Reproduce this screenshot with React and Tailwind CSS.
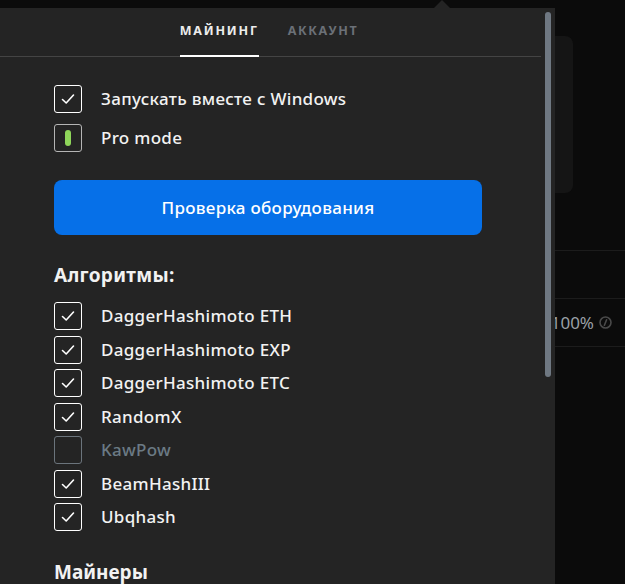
import React from 'react';

const algorithms = [
  { name: 'DaggerHashimoto ETH', on: true },
  { name: 'DaggerHashimoto EXP', on: true },
  { name: 'DaggerHashimoto ETC', on: true },
  { name: 'RandomX', on: true },
  { name: 'KawPow', on: false },
  { name: 'BeamHashIII', on: true },
  { name: 'Ubqhash', on: true },
];

const Check = () => (
  <svg width="16" height="16" viewBox="0 0 16 16" fill="none">
    <path d="M2.5 8.5 L6.2 12 L13.5 4" stroke="#ffffff" strokeWidth="1.6" strokeLinecap="round" strokeLinejoin="round" />
  </svg>
);

const CheckRow = ({ label, on }) => (
  <div className="flex items-center h-[28px] shrink-0">
    <div
      className={`w-[28px] h-[28px] shrink-0 rounded-[3px] border-[1.5px] flex items-center justify-center ${
        on ? 'border-white' : 'border-[#6b747c]'
      }`}
    >
      {on && <Check />}
    </div>
    <span className={`ml-[19px] text-[17px] font-medium tracking-[0.3px] ${on ? 'text-[#f2f2f2]' : 'text-[#6b7a84]'}`}>
      {label}
    </span>
  </div>
);

export default function App() {
  return (
    <div
      className="relative w-[625px] h-[584px] bg-[#0b0b0b] overflow-hidden"
      style={{ fontFamily: '"Noto Sans", "Open Sans", sans-serif' }}
    >
      {/* page behind the popover */}
      <div className="pt-[36px]">
        <div className="h-[157px] mr-[52px] rounded-[8px] bg-[#151515]" />
        <div className="mt-[57px] border-t border-[#1c1c1c]">
          <div className="h-[48px] border-b border-[#1c1c1c]" />
          <div className="h-[48px] border-b border-[#1c1c1c] flex items-center justify-end pr-[13px]">
            <span className="text-[17px] text-[#9aa0a6]">100%</span>
            <svg className="ml-[5px]" width="13" height="13" viewBox="0 0 13 13" fill="none">
              <circle cx="6.5" cy="6.5" r="5.5" stroke="#4a4a4a" strokeWidth="1.6" />
              <path d="M7.6 3.8 L5.4 9.2" stroke="#4a4a4a" strokeWidth="1.6" strokeLinecap="round" />
            </svg>
          </div>
        </div>
      </div>

      {/* notch */}
      <div className="absolute top-0 left-[434px] w-0 h-0 border-l-[8px] border-r-[8px] border-b-[8px] border-l-transparent border-r-transparent border-b-[#242424]" />

      {/* popover */}
      <div className="absolute left-0 top-[8px] bottom-0 w-[555px] bg-[#242424] flex overflow-hidden">
        <div className="w-[541px] flex flex-col">
          <div className="h-[49px] shrink-0 border-b border-[#444444] flex justify-center gap-[29px] pr-[3px]">
            <div className="relative flex items-center">
              <span className="text-[12.5px] font-bold tracking-[1.8px] text-[#ececec] pb-[1px]">МАЙНИНГ</span>
              <div className="absolute left-0 right-0 bottom-[-1px] h-[2px] bg-white" />
            </div>
            <div className="flex items-center">
              <span className="text-[12.5px] font-bold tracking-[1.6px] text-[#6b7077] pb-[1px]">АККАУНТ</span>
            </div>
          </div>

          <div className="pl-[54px] pt-[28px] flex flex-col shrink-0">
            <CheckRow label="Запускать вместе с Windows" on />
            <div className="flex items-center h-[28px] mt-[11px]">
              <div className="w-[28px] h-[28px] shrink-0 rounded-[3px] border-[1.5px] border-[#b5b5b5] flex items-center justify-center">
                <div className="w-[6px] h-[16px] rounded-full bg-[#8fd65a]" />
              </div>
              <span className="ml-[19px] text-[17px] font-medium tracking-[0.3px] text-[#f2f2f2]">Pro mode</span>
            </div>

            <button className="mt-[28px] w-[428px] h-[55px] rounded-[8px] bg-[#0670e8] text-white text-[17px] font-medium tracking-[0.3px]">
              Проверка оборудования
            </button>

            <h3 className="mt-[28px] text-[19px] font-bold tracking-[0.3px] text-[#f2f2f2] leading-[24px]">Алгоритмы:</h3>

            <div className="mt-[15px] flex flex-col gap-[5.5px]">
              {algorithms.map((a) => (
                <CheckRow key={a.name} label={a.name} on={a.on} />
              ))}
            </div>

            <h3 className="mt-[29px] text-[19px] font-bold text-[#f2f2f2] leading-[24px]">Майнеры</h3>
          </div>
        </div>
        <div className="flex-1 pt-[4px] pl-[4px]">
          <div className="w-[6px] h-[365px] rounded-full bg-[#6f7882]" />
        </div>
      </div>
    </div>
  );
}
